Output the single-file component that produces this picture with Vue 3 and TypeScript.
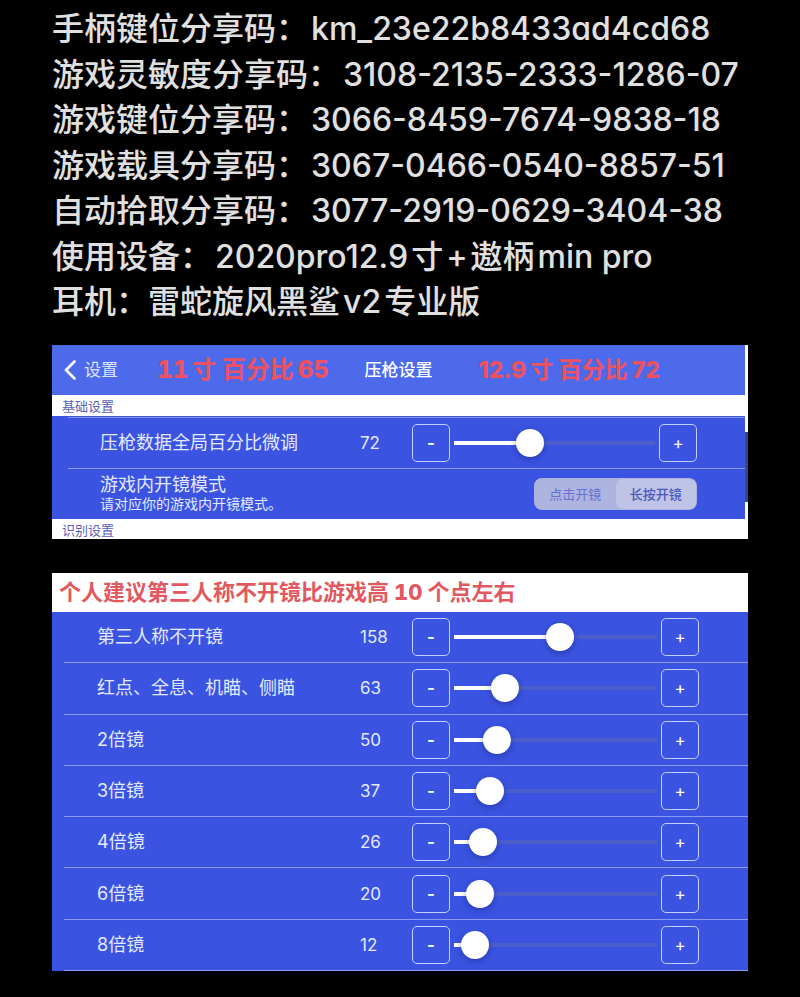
<script setup lang="ts">
import { reactive, ref } from 'vue'

interface Part {
  text: string
  latin: boolean
}

interface Setting {
  label: string
  value: number
  max: number
}

function split(line: string): Part[] {
  const runs = line.match(/[\x20-\x7e]+|[^\x20-\x7e]+/g) ?? []
  return runs.map((text) => ({ text, latin: /[\x20-\x7e]/.test(text) }))
}

const lines: Part[][] = [
  '手柄键位分享码：km_23e22b8433ad4cd68',
  '游戏灵敏度分享码：3108-2135-2333-1286-07',
  '游戏键位分享码：3066-8459-7674-9838-18',
  '游戏载具分享码：3067-0466-0540-8857-51',
  '自动拾取分享码：3077-2919-0629-3404-38',
  '使用设备：2020pro12.9寸+遨柄min pro',
  '耳机：雷蛇旋风黑鲨v2专业版',
].map(split)

const recoil = reactive<Setting>({ label: '压枪数据全局百分比微调', value: 72, max: 200 })

const scopes = reactive<Setting[]>([
  { label: '第三人称不开镜', value: 158, max: 300 },
  { label: '红点、全息、机瞄、侧瞄', value: 63, max: 300 },
  { label: '2倍镜', value: 50, max: 300 },
  { label: '3倍镜', value: 37, max: 300 },
  { label: '4倍镜', value: 26, max: 300 },
  { label: '6倍镜', value: 20, max: 300 },
  { label: '8倍镜', value: 12, max: 300 },
])

const mode = ref<string>('hold')

function step(item: Setting, by: number): void {
  item.value = Math.min(item.max, Math.max(0, item.value + by))
}
</script>

<template>
  <main class="page">
    <section class="codes">
      <p v-for="(line, i) in lines" :key="i" class="line">
        <span v-for="(part, j) in line" :key="j" :class="part.latin ? 'latin' : 'han'">{{ part.text }}</span>
      </p>
    </section>

    <section class="panel first">
      <header class="bar">
        <div class="side">
          <a class="back" href="#">
            <svg class="chevron" viewBox="0 0 12 20" aria-hidden="true">
              <path d="M10.500 1.500L2 10l8.500 8.500" fill="none" stroke="currentColor" stroke-width="2.600" stroke-linecap="round" stroke-linejoin="round" />
            </svg>
            设置
          </a>
          <p class="note large"><b>11</b><span>寸 百分比</span><b>65</b></p>
        </div>
        <h1 class="title">压枪设置</h1>
        <p class="note right"><b>12.9</b><span>寸 百分比</span><b>72</b></p>
      </header>
      <h2 class="group">基础设置</h2>
      <div class="rows top-line">
        <div class="row">
          <label class="name" for="recoil">{{ recoil.label }}</label>
          <output class="value" for="recoil">{{ recoil.value }}</output>
          <button class="step minus" type="button" @click="step(recoil, -1)">-</button>
          <input id="recoil" v-model.number="recoil.value" class="slider" type="range" min="0" :max="recoil.max" :style="{ '--p': recoil.value / recoil.max }" />
          <button class="step" type="button" @click="step(recoil, 1)">+</button>
        </div>
        <div class="row mode">
          <div>
            <p class="mode-name">游戏内开镜模式</p>
            <p class="hint">请对应你的游戏内开镜模式。</p>
          </div>
          <div class="segments" role="radiogroup">
            <label class="segment"><input v-model="mode" type="radio" name="mode" value="tap" />点击开镜</label>
            <label class="segment"><input v-model="mode" type="radio" name="mode" value="hold" />长按开镜</label>
          </div>
        </div>
      </div>
      <h2 class="group">识别设置</h2>
    </section>

    <section class="panel second">
      <p class="advice"><span>个人建议第三人称不开镜比游戏高</span><b>10</b><span>个点左右</span></p>
      <div class="rows scopes">
        <div v-for="(item, i) in scopes" :key="item.label" class="row">
          <label class="name" :for="'scope' + i">{{ item.label }}</label>
          <output class="value" :for="'scope' + i">{{ item.value }}</output>
          <button class="step minus" type="button" @click="step(item, -1)">-</button>
          <input :id="'scope' + i" v-model.number="item.value" class="slider" type="range" min="0" :max="item.max" :style="{ '--p': item.value / item.max }" />
          <button class="step" type="button" @click="step(item, 1)">+</button>
        </div>
      </div>
    </section>
  </main>
</template>

<style>
body {
  margin: 0;
  background: #000;
}
</style>

<style scoped>
.page {
  box-sizing: border-box;
  min-height: 100vh;
  padding: 6px 52px 26px;
  font-family: Inter, 'Noto Sans CJK SC', sans-serif;
  color: #e0e0e0;
  background: #000;
}

p,
h1,
h2 {
  margin: 0;
  font-weight: 400;
}

.codes {
  display: grid;
  align-content: space-between;
  min-height: 318px;
}

.line {
  display: flex;
  align-items: baseline;
  gap: 3px;
  height: 45px;
  line-height: 45px;
  white-space: nowrap;
}

.han {
  font-size: 32px;
  font-weight: 500;
}

.latin {
  font-size: 32px;
  font-weight: 500;
  font-feature-settings: 'cv11';
}

.panel {
  color: #e3e9ff;
}

.first {
  margin-top: 21px;
  padding-right: 3px;
  background: linear-gradient(#fff 87px, #3b4685 87px, #3b4685 157px, #fff 157px);
}

.second {
  margin-top: 34px;
}

.bar {
  display: grid;
  grid-template-columns: 1fr auto 1fr;
  align-items: center;
  height: 50px;
  padding: 0 12px;
  background: #4d6aeb;
}

.side {
  display: flex;
  align-items: center;
  gap: 39px;
}

.back {
  display: flex;
  align-items: center;
  gap: 8px;
  font-size: 17px;
  line-height: 20px;
  color: #dde4ff;
  text-decoration: none;
}

.chevron {
  width: 12px;
  height: 20px;
  color: #fff;
}

.title {
  font-size: 17px;
  font-weight: 500;
  line-height: 20px;
  color: #fff;
}

.note {
  display: flex;
  align-items: baseline;
  gap: 4px;
  font-size: 24px;
  font-weight: 700;
  line-height: 32px;
  white-space: nowrap;
  color: #ee515f;
}

.note b,
.advice b {
  font-weight: 800;
}

.large b,
.advice b {
  font-variant-numeric: tabular-nums;
}

.right {
  padding-left: 46px;
  font-size: 23px;
}

.group {
  height: 21px;
  padding-left: 10px;
  font-size: 13px;
  line-height: 22px;
  color: #5a62b5;
  background: #fff;
}

.group:last-child {
  height: 20px;
}

.rows {
  background: #3a54e1;
}

.top-line {
  padding-top: 1px;
}

.top-line::before {
  content: '';
  display: block;
  height: 1px;
  margin-left: 16px;
  background: #7f92ee;
}

.row {
  box-sizing: border-box;
  display: grid;
  grid-template-columns: minmax(0, 260fr) 52px 38px minmax(0, 209fr) 38px;
  align-items: center;
  min-height: 51px;
  margin-left: 16px;
  padding: 0 48px 0 32px;
  border-bottom: 1px solid #8a9bf0;
}

.name,
.mode-name {
  font-size: 18px;
  line-height: 20px;
}

.value {
  font-size: 17px;
}

.step {
  box-sizing: border-box;
  width: 38px;
  height: 38px;
  padding: 0;
  border: 1px solid #c3cdff;
  border-radius: 5px;
  font: 400 17px/36px Inter, sans-serif;
  color: #fff;
  background: transparent;
}

.minus {
  font-weight: 600;
}

.slider {
  appearance: none;
  min-width: 0;
  height: 28px;
  margin: 0 4px;
  border-radius: 2px;
  background:
    linear-gradient(#fff, #fff) 0 50% / calc(14px + (100% - 28px) * var(--p)) 4px no-repeat,
    linear-gradient(#4a5fcb, #4a5fcb) 0 50% / 100% 4px no-repeat;
}

.slider::-webkit-slider-thumb {
  appearance: none;
  width: 28px;
  height: 28px;
  border-radius: 50%;
  background: #fff;
  box-shadow: 0 2px 6px rgba(10, 20, 90, 0.4);
}

.mode {
  grid-template-columns: 1fr 163px;
  min-height: 50px;
  border-bottom: 0;
}

.hint {
  font-size: 14px;
  line-height: 18px;
}

.segments {
  box-sizing: border-box;
  display: grid;
  grid-template-columns: 1fr 1fr;
  height: 32px;
  padding: 1px;
  border-radius: 8px;
  background: #adb4df;
}

.segment {
  border-radius: 7px;
  font-size: 13px;
  line-height: 30px;
  text-align: center;
  color: #6672d0;
}

.segment input {
  position: absolute;
  opacity: 0;
}

.segment:has(input:checked) {
  font-weight: 500;
  color: #4a56bd;
  background: #bfc3e6;
}

.advice {
  display: flex;
  align-items: baseline;
  gap: 5px;
  height: 39px;
  padding-left: 7px;
  font-size: 22px;
  font-weight: 700;
  line-height: 39px;
  white-space: nowrap;
  color: #e25860;
  background: #fff;
}

.scopes {
  display: grid;
  grid-auto-rows: 1fr;
  min-height: 359px;
}

.scopes .row {
  grid-template-columns: minmax(0, 263fr) 52px 38px minmax(0, 211fr) 39px;
  margin-left: 12px;
  padding-left: 33px;
}
</style>
